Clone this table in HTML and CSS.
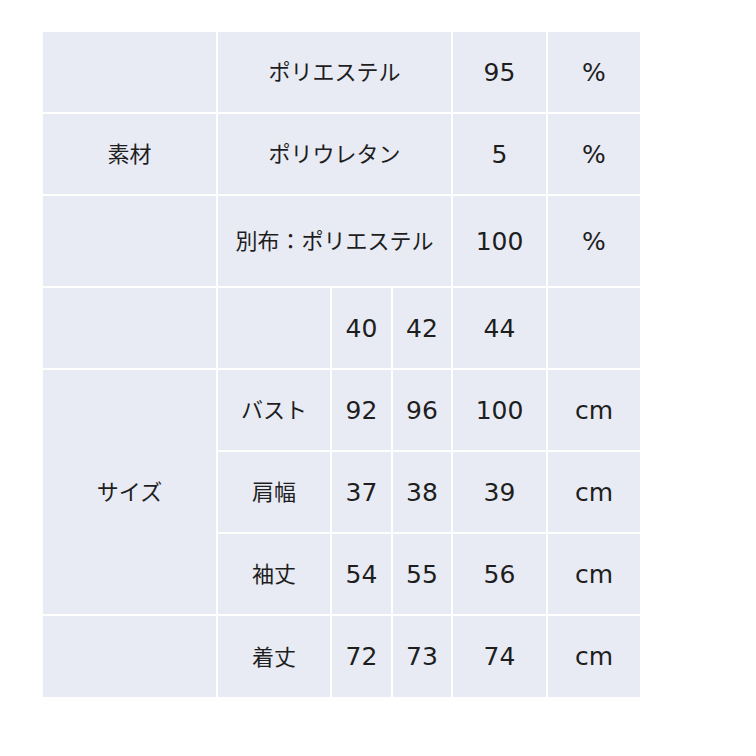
FILE: index.html
```html
<!DOCTYPE html>
<html lang="ja">
<head>
<meta charset="utf-8">
<title>素材・サイズ</title>
<link rel="stylesheet" href="styles.css">
</head>
<body>
<table class="spec">
  <colgroup>
    <col class="c1"><col class="c2"><col class="c3"><col class="c4"><col class="c5"><col class="c6">
  </colgroup>
  <tbody>
    <tr>
      <td></td>
      <td colspan="3">ポリエステル</td>
      <td class="n">95</td>
      <td class="n">%</td>
    </tr>
    <tr>
      <td>素材</td>
      <td colspan="3">ポリウレタン</td>
      <td class="n">5</td>
      <td class="n">%</td>
    </tr>
    <tr class="tall">
      <td></td>
      <td colspan="3">別布：ポリエステル</td>
      <td class="n">100</td>
      <td class="n">%</td>
    </tr>
    <tr>
      <td></td>
      <td></td>
      <td class="n">40</td>
      <td class="n">42</td>
      <td class="n">44</td>
      <td></td>
    </tr>
    <tr>
      <td rowspan="3">サイズ</td>
      <td>バスト</td>
      <td class="n">92</td>
      <td class="n">96</td>
      <td class="n">100</td>
      <td class="n">cm</td>
    </tr>
    <tr>
      <td>肩幅</td>
      <td class="n">37</td>
      <td class="n">38</td>
      <td class="n">39</td>
      <td class="n">cm</td>
    </tr>
    <tr>
      <td>袖丈</td>
      <td class="n">54</td>
      <td class="n">55</td>
      <td class="n">56</td>
      <td class="n">cm</td>
    </tr>
    <tr class="last">
      <td></td>
      <td>着丈</td>
      <td class="n">72</td>
      <td class="n">73</td>
      <td class="n">74</td>
      <td class="n">cm</td>
    </tr>
  </tbody>
</table>
</body>
</html>
```

FILE: styles.css
```css
html, body {
  margin: 0;
  padding: 0;
  background: #ffffff;
}

.spec {
  margin: 30px 0 0 41px;
  border-collapse: separate;
  border-spacing: 2px;
  table-layout: fixed;
  width: 601px;
  font-family: "Noto Sans CJK JP", "DejaVu Sans", sans-serif;
  font-size: 22px;
  color: #1e1e1e;
}

.c1 { width: 173px; }
.c2 { width: 112px; }
.c3 { width: 59px; }
.c4 { width: 58px; }
.c5 { width: 93px; }
.c6 { width: 92px; }

.spec td {
  background: #e8ebf4;
  padding: 0 0 4px 0;
  height: 80px;
  text-align: center;
  vertical-align: middle;
  line-height: 1;
  white-space: nowrap;
  box-sizing: border-box;
}

.spec .tall td {
  height: 90px;
}

.spec .last td {
  height: 81px;
}

.spec td.n {
  padding: 0;
  font-family: "DejaVu Sans", "Noto Sans CJK JP", sans-serif;
  font-size: 25px;
}
```
